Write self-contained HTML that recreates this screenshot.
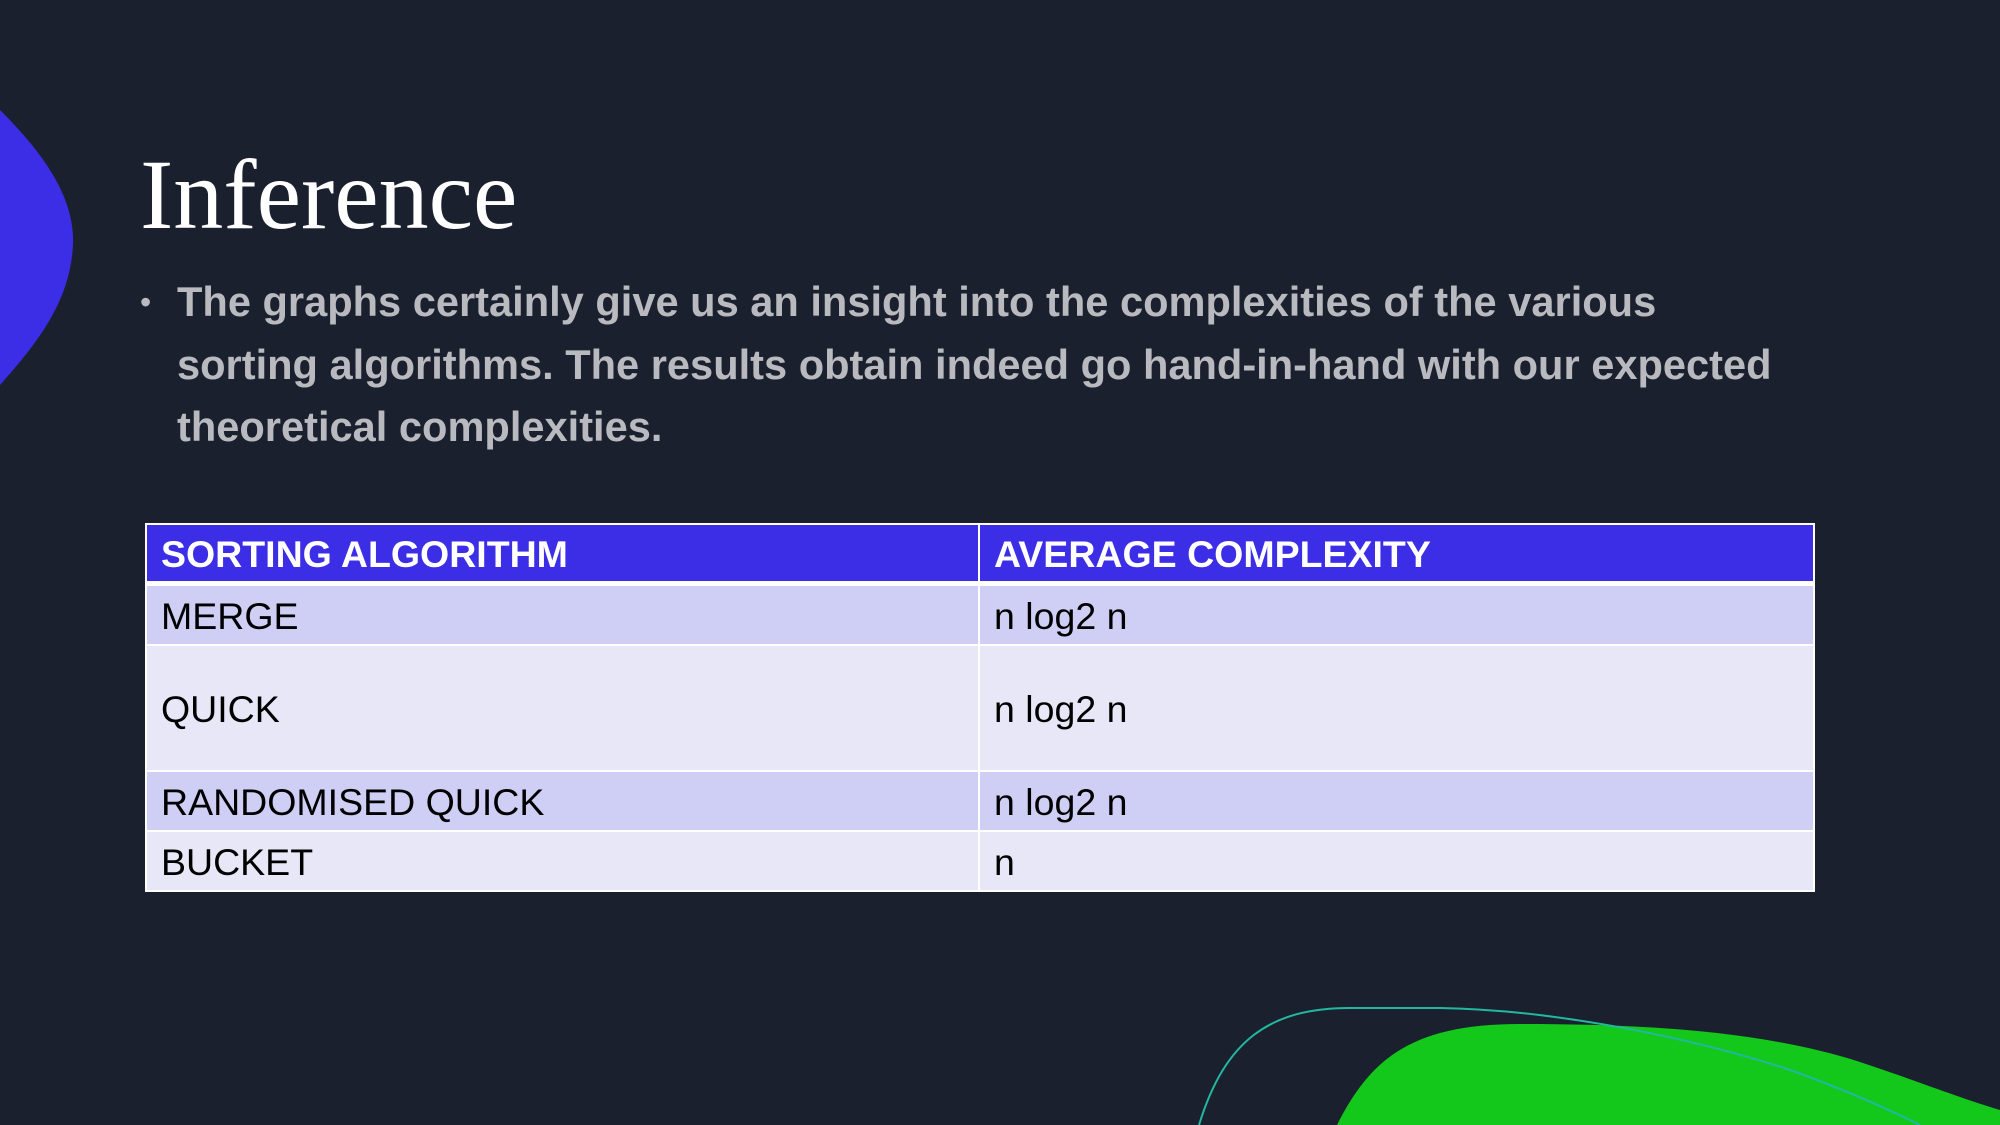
<!DOCTYPE html>
<html><head><meta charset="utf-8"><style>
html,body{margin:0;padding:0}
body{width:2000px;height:1125px;background:#1b202e;position:relative;overflow:hidden;font-family:"Liberation Sans",Arial,sans-serif}
svg.bg{position:absolute;left:0;top:0}
h1{position:absolute;left:140px;top:140px;margin:0;font-family:"Liberation Serif",serif;font-weight:normal;font-size:100px;line-height:110px;color:#fff}
.txt{position:absolute;left:177px;top:271px;width:1700px;font-weight:bold;font-size:41.6px;line-height:62.5px;color:#b9babf;white-space:nowrap}
.bul{position:absolute;left:140px;top:271px;font-size:32px;line-height:62.5px;color:#b9babf}
table{position:absolute;left:145px;top:523px;width:1670px;border-collapse:collapse;font-size:37.5px}
td{border:2px solid #fff;padding:2px 0 0 14px;color:#000;vertical-align:middle}
tr.h td{background:#3b2ee6;color:#fff;font-weight:bold;height:54px;border-bottom:5px solid #fff}
tr.a td{background:#cfcef5}
tr.b td{background:#e8e7f8}
td.c1{width:817px}
</style></head><body>
<svg class="bg" width="2000" height="1125" viewBox="0 0 2000 1125">
<path d="M0 110 C40 150 75 195 73 245 C70 300 40 340 0 385 Z" fill="#3b2ee6"/>
<path d="M1337 1125 C1370 1060 1410 1024 1520 1024 C1640 1024 1760 1030 1860 1062 C1920 1082 1960 1098 2000 1110 L2000 1125 Z" fill="#14c71b"/>
<path d="M1199 1125 C1225 1040 1270 1008 1350 1008 L1440 1008 C1560 1010 1700 1040 1790 1070 C1840 1088 1880 1105 1920 1125" fill="none" stroke="#22b8a0" stroke-width="2"/>
</svg>
<h1>Inference</h1>
<div class="bul">•</div>
<div class="txt">The graphs certainly give us an insight into the complexities of the various<br>sorting algorithms. The results obtain indeed go hand-in-hand with our expected<br>theoretical complexities.</div>
<table>
<tr class="h"><td class="c1">SORTING ALGORITHM</td><td>AVERAGE COMPLEXITY</td></tr>
<tr class="a"><td class="c1" style="height:56px">MERGE</td><td>n log2 n</td></tr>
<tr class="b"><td class="c1" style="height:122px">QUICK</td><td>n log2 n</td></tr>
<tr class="a"><td class="c1" style="height:56px">RANDOMISED QUICK</td><td>n log2 n</td></tr>
<tr class="b"><td class="c1" style="height:56px">BUCKET</td><td>n</td></tr>
</table>
</body></html>
